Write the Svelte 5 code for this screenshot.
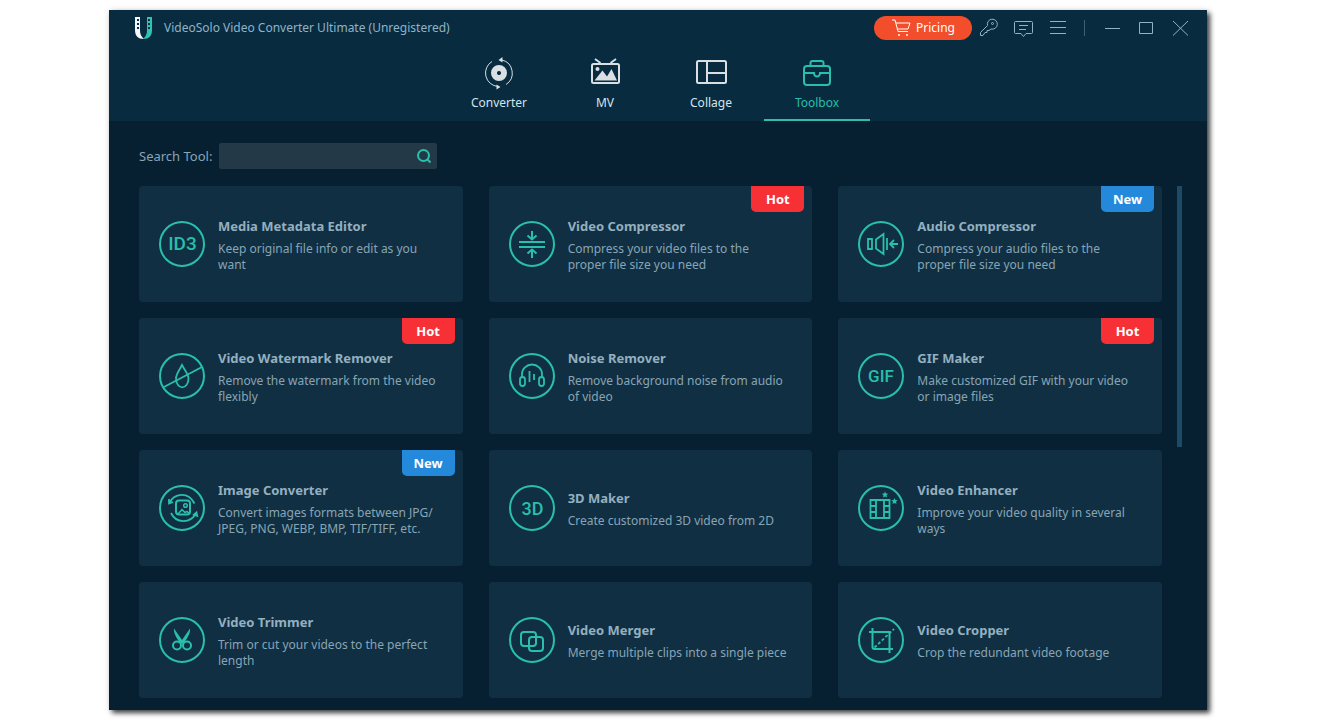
<script>
  const tabs = ["Converter", "MV", "Collage", "Toolbox"];

  const tools = [
    { icon: "id3", name: "Media Metadata Editor", text: "Keep original file info or edit as you\nwant" },
    { icon: "compress", name: "Video Compressor", text: "Compress your video files to the\nproper file size you need", badge: "Hot" },
    { icon: "audio", name: "Audio Compressor", text: "Compress your audio files to the\nproper file size you need", badge: "New" },
    { icon: "watermark", name: "Video Watermark Remover", text: "Remove the watermark from the video\nflexibly", badge: "Hot" },
    { icon: "noise", name: "Noise Remover", text: "Remove background noise from audio\nof video" },
    { icon: "gif", name: "GIF Maker", text: "Make customized GIF with your video\nor image files", badge: "Hot" },
    { icon: "image", name: "Image Converter", text: "Convert images formats between JPG/\nJPEG, PNG, WEBP, BMP, TIF/TIFF, etc.", badge: "New" },
    { icon: "3d", name: "3D Maker", text: "Create customized 3D video from 2D" },
    { icon: "enhance", name: "Video Enhancer", text: "Improve your video quality in several\nways" },
    { icon: "trim", name: "Video Trimmer", text: "Trim or cut your videos to the perfect\nlength" },
    { icon: "merge", name: "Video Merger", text: "Merge multiple clips into a single piece" },
    { icon: "crop", name: "Video Cropper", text: "Crop the redundant video footage" },
  ];

  let active = $state("Toolbox");
  let query = $state("");

  let shown = $derived(tools.filter((t) => t.name.toLowerCase().includes(query.trim().toLowerCase())));
</script>

{#snippet tabIcon(name)}
  <svg class="tab-icon" viewBox="0 0 34 34" fill="none" stroke="currentColor" stroke-width="2" aria-hidden="true">
    {#if name === "Converter"}
      <circle cx="17" cy="17" r="5" stroke-width="6" />
      <path d="M17 15v4M15 17h4" stroke="#082b40" stroke-width="1" />
      <g stroke-width="1">
        <path d="M10 5.500A13.500 13.500 0 0 0 16 30.500M20 4A13.500 13.500 0 0 1 24 28.500" />
        <path d="M16.500 4l4-3v5.500zM18.500 31l-4-2.500v5z" fill="currentColor" stroke="none" />
      </g>
    {:else if name === "MV"}
      <rect x="4" y="8" width="27" height="19" rx="1.500" />
      <path d="M7 3l5.500 4M28 3l-5.500 4" />
      <circle cx="9.500" cy="13" r="2" fill="currentColor" stroke="none" />
      <path d="M6.500 24.500l8-10 4.500 6 4.500-7.500 5.500 11.500z" fill="currentColor" stroke="none" />
    {:else if name === "Collage"}
      <rect x="3" y="5" width="29" height="22" rx="1.500" />
      <path d="M13 5v22M13 17h19" />
    {:else}
      <rect x="4" y="10" width="26" height="19" rx="3" />
      <path d="M10.500 10V7a2 2 0 0 1 2-2h9a2 2 0 0 1 2 2v3M4 17h10a3 3.500 0 0 0 6 0h10" />
    {/if}
  </svg>
{/snippet}

{#snippet toolIcon(name)}
  <svg class="tool-icon" viewBox="0 0 46 46" fill="none" stroke="currentColor" stroke-width="2" aria-hidden="true">
    <circle cx="23" cy="23" r="22" />
    {#if name === "id3"}
      <text x="23.500" y="29" font-size="19">ID3</text>
    {:else if name === "gif"}
      <text x="23" y="29" font-size="17">GIF</text>
    {:else if name === "3d"}
      <text x="23.500" y="29.500" font-size="18">3D</text>
    {:else if name === "compress"}
      <path d="M10 21h26M10 26h26M23 10v8M18.500 14.500l4.500 4 4.500-4M23 37v-8M18.500 32.500l4.500-4 4.500 4" />
    {:else if name === "audio"}
      <path d="M10 18h4v10h-4zM18 18.500v9l7.500 5.500V13zM29 17v12M32 23h8M36 19l-4 4 4 4" stroke-width="1.800" />
    {:else if name === "watermark"}
      <path d="M23 12c-2.500 5-6 9-6 13.500a6 8.500 0 0 0 12.500 0C29.500 21 25.500 17 23 12zM4 34.500L43 14" stroke-width="1.800" />
    {:else if name === "noise"}
      <path d="M13 24v-3a10 9.500 0 0 1 20 0v3" stroke-width="1.800" />
      <rect x="11" y="24" width="5" height="9" rx="2.500" stroke-width="1.800" />
      <rect x="30" y="24" width="5" height="9" rx="2.500" stroke-width="1.800" />
      <path d="M20.500 18v11M25 21v6" stroke-width="1.800" />
    {:else if name === "image"}
      <rect x="17" y="15.500" width="14" height="14" rx="3" />
      <circle cx="26.500" cy="20.500" r="1.800" stroke-width="1.500" />
      <path d="M19 29l4-4.500 3 3 2-1 2.500 2.500" stroke-width="1.500" />
      <path d="M10 18.500C15 8 29 6 35.500 18.500M10 14v4.500l4-1.500M12 28C17 38.500 31 39 37.500 28M34 30.500l3.500-3 1 4.500" stroke-width="1.800" />
    {:else if name === "enhance"}
      <path d="M12.500 15h19v18h-19zM18 15v18M26 15v18M12.500 21H18M12.500 27H18M26 21h5.500M26 27h5.500" stroke-width="1.800" />
      <path
        d="M27 6.500l.9 2.100 2.300.2-1.700 1.500.5 2.300-2-1.200-2 1.200.5-2.300-1.700-1.500 2.300-.2zM36.500 13l.9 2.100 2.300.2-1.700 1.500.5 2.300-2-1.200-2 1.200.5-2.300-1.700-1.500 2.300-.2z"
        fill="currentColor"
        stroke="none"
      />
    {:else if name === "trim"}
      <circle cx="18" cy="28.500" r="4" />
      <circle cx="28" cy="28.500" r="4" />
      <path d="M15 11.500c-.5 4 1.500 8 5.500 13.500l2.500 2 2.500-2c4-5.500 6-9.500 5.500-13.500L23 23z" fill="currentColor" stroke="none" />
    {:else if name === "merge"}
      <rect x="12" y="15" width="15" height="14" rx="3" />
      <rect x="20" y="20" width="14" height="14" rx="3" />
    {:else if name === "crop"}
      <path d="M11 15h20.500v21M14.500 11v19a2 2 0 0 0 2 2H35" />
      <path d="M16.500 30.500L36 12" stroke-width="1.800" stroke-dasharray="3 2" />
    {/if}
  </svg>
{/snippet}

<div class="window">
  <header>
    <div class="titlebar">
      <svg class="logo" viewBox="0 0 20 24" aria-hidden="true">
        <path d="M1 1h5v13c0 4 1 6 4 9C4 23 1 20 1 14z" fill="#f4f8fa" />
        <path d="M18 1h-5v13c0 4-1 6-4 9 6 0 9-3 9-9z" fill="#2fc4b2" />
        <path d="M3 3h2v2H3zM3 7h2v2H3zM3 11h2v2H3zM14 3h2v2h-2zM14 7h2v2h-2zM14 11h2v2h-2z" fill="#082b40" />
      </svg>
      <h1>VideoSolo Video Converter Ultimate (Unregistered)</h1>
      <button class="pricing">
        <svg width="20" height="18" viewBox="0 0 20 18" fill="none" stroke="currentColor" aria-hidden="true">
          <path d="M1 1h3l3 11.500h10M5 4h14l-2 6H6.500" />
          <circle cx="8" cy="16" r="1" fill="currentColor" stroke="none" />
          <circle cx="16" cy="16" r="1" fill="currentColor" stroke="none" />
        </svg>
        Pricing
      </button>
      <div class="controls">
        <button aria-label="Register">
          <svg viewBox="0 0 20 20"><path d="M1.500 17.500v-3l7-7a5 5 0 1 1 3.500 3.500l-2 1.500H8v2H6l-2 3z" /><circle cx="13.500" cy="5.500" r="1" /></svg>
        </button>
        <button aria-label="Feedback">
          <svg viewBox="0 0 20 20"><path d="M2.500 3.500h16a1 1 0 0 1 1 1v10a1 1 0 0 1-1 1H13l-2.500 3-2.500-3H2.500a1 1 0 0 1-1-1v-10a1 1 0 0 1 1-1zM6 7.500h9M6 11.500h7" /></svg>
        </button>
        <button aria-label="Menu">
          <svg viewBox="0 0 20 20"><path d="M3 3.500h16M3 9.500h16M3 15.500h16" /></svg>
        </button>
        <span class="divider"></span>
        <button aria-label="Minimize">
          <svg viewBox="0 0 20 20"><path d="M3 10.500h15" /></svg>
        </button>
        <button aria-label="Maximize">
          <svg viewBox="0 0 20 20"><path d="M3.500 4.500h13v11h-13z" /></svg>
        </button>
        <button aria-label="Close">
          <svg viewBox="0 0 20 20"><path d="M3 3l15 14.500M18 3L3 17.500" /></svg>
        </button>
      </div>
    </div>
    <nav>
      {#each tabs as tab}
        <button class="tab" class:active={active === tab} onclick={() => (active = tab)}>
          {@render tabIcon(tab)}
          {tab}
        </button>
      {/each}
    </nav>
  </header>

  <main>
    <div class="search">
      <label for="search">Search Tool:</label>
      <div class="field">
        <input id="search" type="text" bind:value={query} />
        <svg viewBox="0 0 16 16" fill="none" stroke="currentColor" stroke-width="2" aria-hidden="true">
          <circle cx="7.500" cy="7.500" r="5.500" /><path d="M11 11l3.500 3.500" />
        </svg>
      </div>
    </div>

    <div class="scroller">
      <div class="grid">
        {#each shown as tool}
          <button class="card">
            {@render toolIcon(tool.icon)}
            <span class="info">
              <strong>{tool.name}</strong>
              <span class="text">{tool.text}</span>
            </span>
            {#if tool.badge}
              <span class="badge" class:new={tool.badge === "New"}>{tool.badge}</span>
            {/if}
          </button>
        {/each}
      </div>
      <div class="track"><div class="thumb"></div></div>
    </div>
  </main>
</div>

<style>
  :global(body) {
    margin: 0;
    background: #fff;
  }
  .window {
    margin: 10px 125px 11px 109px;
    background: #072031;
    color: #87a5b5;
    box-shadow: 3px 3px 5px rgba(0, 0, 0, 0.75), 0 0 8px rgba(0, 0, 0, 0.08);
    font-family: "Noto Sans", sans-serif;
    font-size: 12px;
    line-height: 16px;
  }
  button {
    padding: 0;
    border: 0;
    background: none;
    color: inherit;
    font: inherit;
    cursor: pointer;
  }

  header { background: #082b40; }
  .titlebar {
    display: flex;
    align-items: center;
    height: 36px;
    padding: 0 17px 0 25px;
  }
  .logo { width: 20px; height: 24px; }
  h1 {
    flex: 1;
    margin: 0 0 0 10px;
    font-size: 12px;
    font-weight: 400;
    line-height: 18px;
    color: #8fb3c8;
  }
  .pricing {
    display: flex;
    align-items: center;
    gap: 5px;
    height: 24px;
    margin-right: 7px;
    padding: 0 17px;
    border-radius: 12px;
    background: #f34e2b;
    color: #fff;
  }
  .controls {
    display: flex;
    align-items: center;
    gap: 14px;
    color: #8fb3c8;
  }
  .controls button, .controls svg {
    display: block;
    width: 20px;
    height: 20px;
  }
  .controls svg { fill: none; stroke: currentColor; }
  .divider {
    width: 1px;
    height: 16px;
    margin: 0 3px;
    background: #3d6076;
  }

  nav { display: flex; justify-content: center; }
  .tab {
    display: flex;
    flex-direction: column;
    align-items: center;
    gap: 5px;
    width: 106px;
    padding: 10px 0 8px;
    border-bottom: 2px solid transparent;
    color: #d3e4ee;
  }
  .tab-icon { width: 34px; height: 34px; color: #d9dfe3; }
  .tab.active { border-color: #2fbcab; color: #29bfac; }
  .tab.active .tab-icon { color: #29bfac; }

  main { padding: 22px 25px 12px 30px; }
  .search {
    display: flex;
    align-items: center;
    margin-bottom: 17px;
  }
  .search label { width: 80px; font-size: 13px; }
  .field {
    display: flex;
    align-items: center;
    width: 218px;
    height: 26px;
    box-sizing: border-box;
    padding: 0 5px 0 8px;
    border-radius: 2px;
    background: #243947;
    color: #29bfac;
  }
  .field input {
    flex: 1;
    min-width: 0;
    padding: 0;
    border: 0;
    outline: 0;
    background: none;
    color: #d3e4ee;
    font: inherit;
  }
  .field svg { width: 16px; height: 16px; }

  .scroller { display: flex; gap: 15px; }
  .grid {
    flex: 1;
    display: grid;
    grid-template-columns: repeat(3, 1fr);
    grid-auto-rows: 116px;
    gap: 16px 26px;
  }
  .track { width: 5px; }
  .thumb { height: 51%; background: #1d4b65; }

  .card {
    position: relative;
    display: flex;
    align-items: center;
    gap: 13px;
    padding: 0 0 0 20px;
    border-radius: 4px;
    background: #112f42;
    text-align: left;
  }
  .tool-icon { flex: none; width: 46px; height: 46px; color: #29bfac; }
  .tool-icon text {
    fill: currentColor;
    stroke: none;
    font-family: Roboto, sans-serif;
    font-weight: 500;
    text-anchor: middle;
  }
  .info {
    display: flex;
    flex-direction: column;
    gap: 6px;
    padding-top: 2px;
  }
  strong { font-size: 13px; line-height: 18px; color: #93b0c0; }
  .text { white-space: pre-line; }
  .badge {
    position: absolute;
    top: 0;
    right: 8px;
    width: 53px;
    border-radius: 0 0 5px 5px;
    background: #f63034;
    color: #fff;
    font-size: 13px;
    font-weight: 700;
    line-height: 26px;
    text-align: center;
  }
  .badge.new { background: #2488db; }
</style>
